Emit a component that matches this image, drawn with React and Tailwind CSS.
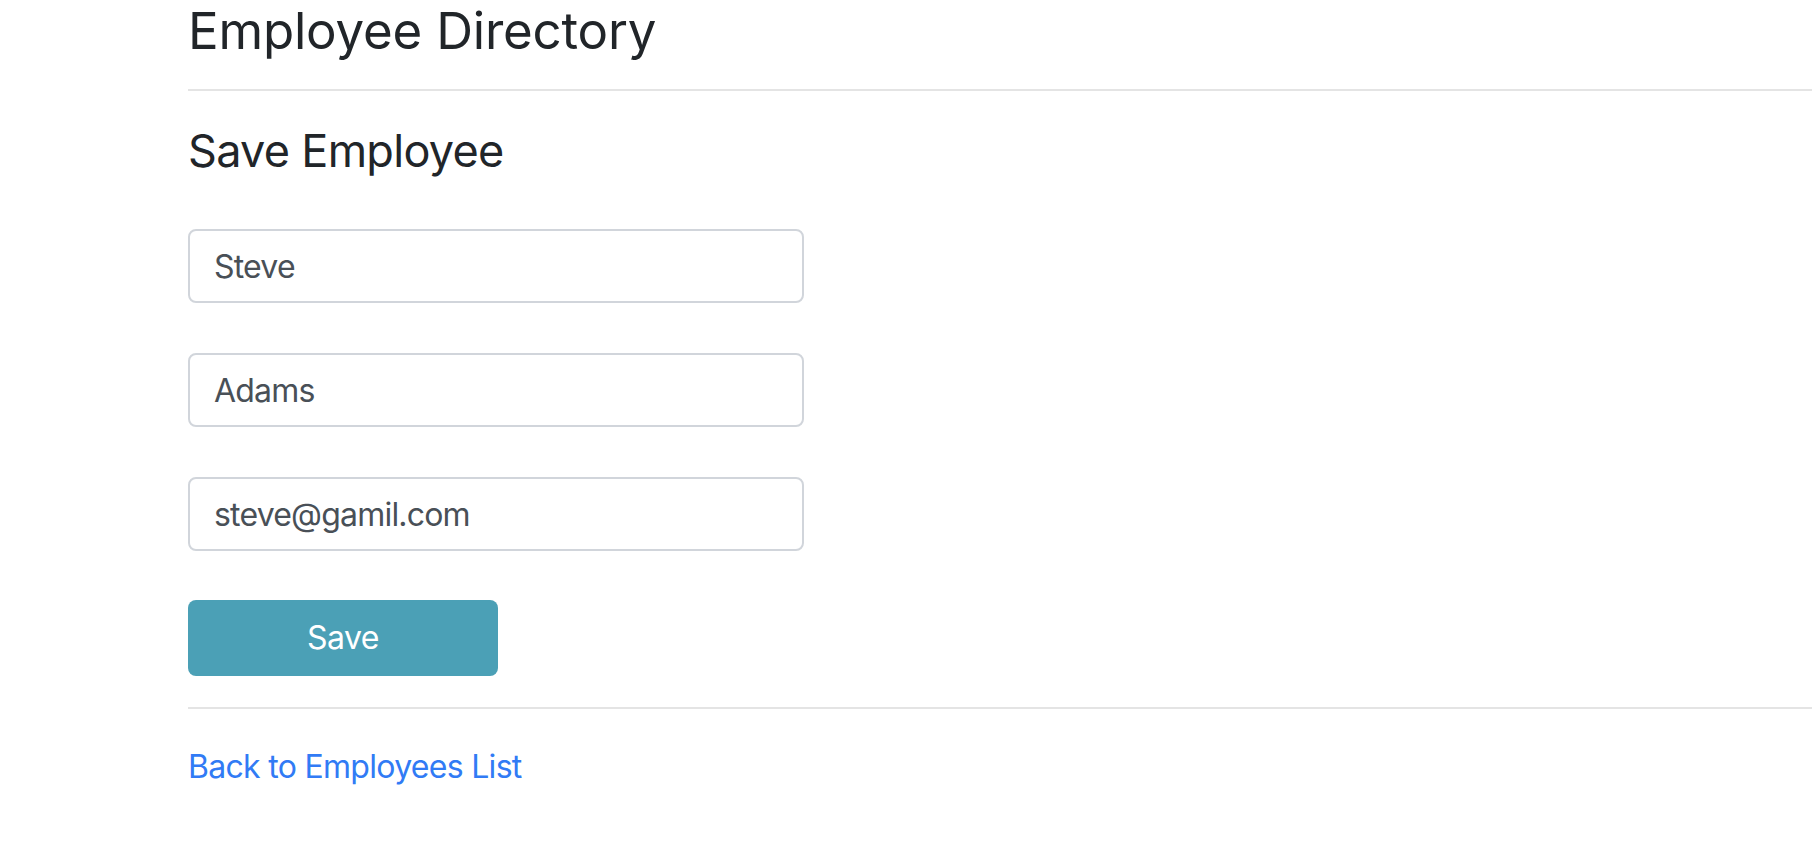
import React, { useState } from 'react';

/**
 * SaveEmployee - formulário simples para criar/editar funcionário
 */
const fields = [
  { name: 'firstName', value: 'Steve' },
  { name: 'lastName', value: 'Adams' },
  { name: 'email', value: 'steve@gamil.com' },
];

const App = () => {
  const [form, setForm] = useState(
    Object.fromEntries(fields.map((f) => [f.name, f.value]))
  );

  const onChange = (e) => setForm({ ...form, [e.target.name]: e.target.value });

  return (
    <div className="min-h-[860px] bg-white font-['Inter','Liberation_Sans',sans-serif] text-[#212529] overflow-hidden">
      <div className="pl-[188px]">
        {/* Header */}
        <h1 className="text-[51px] leading-[62px] font-normal tracking-[-0.2px]">Employee Directory</h1>
        <hr className="mt-[27px] border-0 border-t-2 border-[#e4e4e4]" />

        {/* Form */}
        <h3 className="mt-[33px] text-[45px] leading-[54px] font-normal tracking-[-0.7px]">Save Employee</h3>

        <form className="mt-[51px] flex flex-col gap-[50px] w-[616px]" onSubmit={(e) => e.preventDefault()}>
          {fields.map((f) => (
            <input
              key={f.name}
              name={f.name}
              value={form[f.name]}
              onChange={onChange}
              className="h-[74px] w-full rounded-[8px] border-2 border-[#d1d5db] px-[24px] text-[32px] tracking-[-0.8px] text-[#495057] outline-none"
            />
          ))}
          <button
            type="submit"
            className="mt-[-1px] h-[76px] w-[310px] rounded-[8px] bg-[#4ba0b6] text-[32px] tracking-[-0.5px] text-white"
          >
            Save
          </button>
        </form>

        <hr className="mt-[31px] border-0 border-t-2 border-[#e4e4e4]" />

        <a href="#" className="mt-[39px] inline-block text-[32px] leading-[38px] tracking-[-0.7px] text-[#317bf5]">
          Back to Employees List
        </a>
      </div>
    </div>
  );
};

export default App;
